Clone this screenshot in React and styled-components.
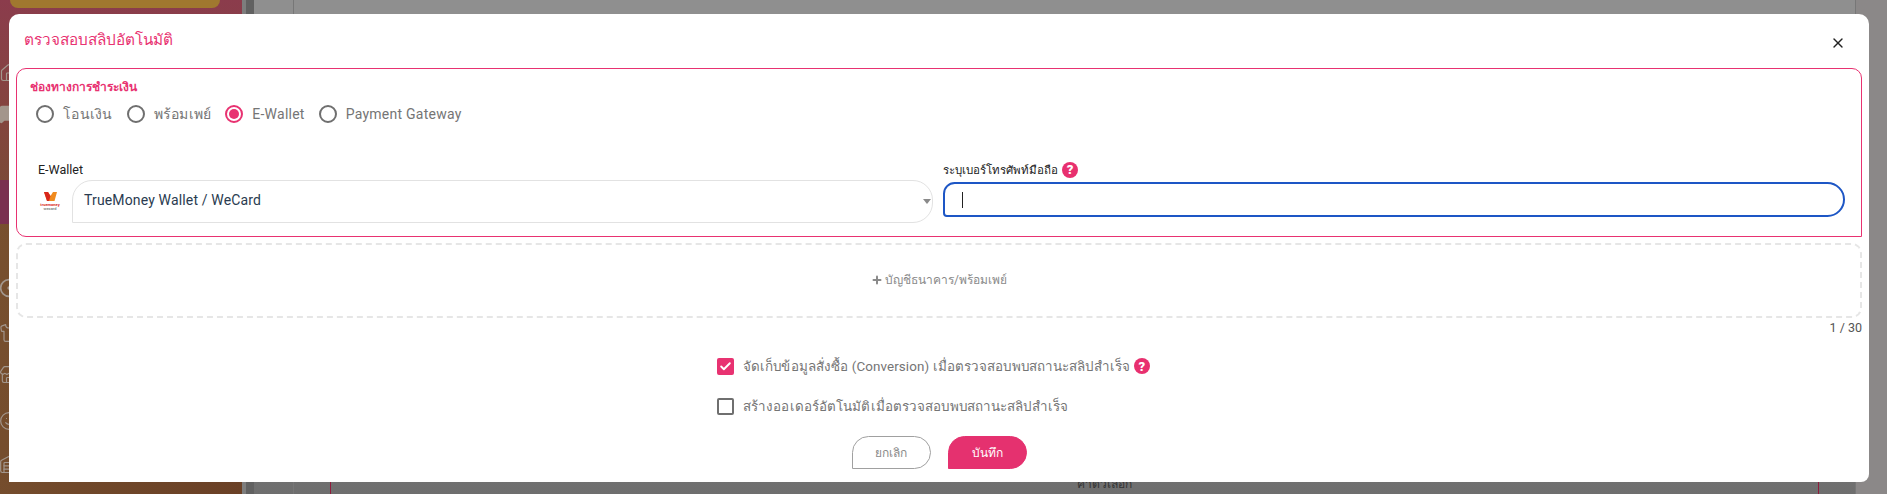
import styled, { createGlobalStyle } from "styled-components";
import { Home, MessageSquare, CircleDot, Shirt, Store, Smile, Warehouse, X, Plus, Check } from "lucide-react";

const GlobalStyle = createGlobalStyle`
  html, body { margin: 0; padding: 0; height: 100%; overflow: hidden; }
  body { font-family: Roboto, "Noto Sans", sans-serif; background: #8a8787; }
  * { box-sizing: border-box; }
`;

const Page = styled.div`
  display: flex;
  height: 494px;
  width: 1887px;
  overflow: hidden;
  background: #8b8888;
`;

const Sidebar = styled.aside`
  width: 242px;
  flex: none;
  display: flex;
  flex-direction: column;
  background: linear-gradient(100deg, #7a5230 0%, #70482a 50%, #6a4026 100%);
`;

const SideTop = styled.div`
  height: 180px;
  flex: none;
  background: linear-gradient(180deg, #8b3c4c 0%, #84443f 60%, #7c4a38 100%);
`;

const SideBand = styled.div`
  height: 44px;
  background: #7a3050;
  flex: none;
`;

const YellowPill = styled.div`
  width: 210px;
  height: 8px;
  margin-left: 10px;
  background: #a0782f;
  border-radius: 0 0 10px 10px;
`;

const SideIcons = styled.div`
  display: flex;
  flex-direction: column;
  margin-left: -1px;
  color: #a3968c;
`;

const SideIcon = styled.div`
  margin-top: ${(p) => p.$top}px;
  height: 20px;
`;

const Gutter = styled.div`
  width: 12px;
  flex: none;
  background: linear-gradient(90deg, #7d7d7d 0 4px, #616161 4px 100%);
`;

const LeftStrip = styled.div`
  width: 39px;
  flex: none;
  background: linear-gradient(180deg, #8f8f8f 0%, #8f8f8f 60%, #6e6e6e 100%);
`;

const Content = styled.main`
  width: 1563px;
  flex: none;
  display: flex;
  flex-direction: column;
  align-items: center;
  justify-content: flex-end;
  padding-bottom: 3px;
  border-left: 1px solid #777;
  border-right: 1px solid #777;
  background: linear-gradient(180deg, #8f8f8f 0%, #8f8f8f 60%, #6e6e6e 100%);
  position: relative;
`;

const PeekText = styled.div`
  font-size: 12px;
  color: #333;
  line-height: 14px;
  height: 10px;
  margin-left: 59px;
  overflow: hidden;
  display: flex;
  align-items: flex-end;
`;

const RedLine = styled.div`
  position: absolute;
  left: ${(p) => p.$left}px;
  bottom: 0;
  width: 1px;
  height: 12px;
  background: #8f1b3b;
`;

const Modal = styled.div`
  position: fixed;
  left: 9px;
  top: 14px;
  width: 1860px;
  height: 468px;
  background: #fff;
  border-radius: 10px 10px 8px 0;
  display: flex;
  flex-direction: column;
  padding: 0 7px;
`;

const ModalHeader = styled.header`
  height: 54px;
  flex: none;
  display: flex;
  align-items: center;
  justify-content: space-between;
  padding: 0 12px 0 8px;
`;

const Title = styled.h2`
  margin: 0 0 4px;
  font-size: 15.3px;
  font-weight: 400;
  color: #e83271;
`;

const CloseButton = styled.button`
  border: 0;
  background: none;
  padding: 0;
  width: 24px;
  height: 24px;
  margin-top: 4px;
  display: flex;
  align-items: center;
  justify-content: center;
  color: #222;
`;

const ChannelBox = styled.section`
  height: 169px;
  flex: none;
  width: 1846px;
  border: 1px solid #e83271;
  border-radius: 10px 10px 0 10px;
  padding: 11px 14px 0 13px;
`;

const ChannelLabel = styled.div`
  font-size: 12px;
  font-weight: 700;
  line-height: 14px;
  color: #e83271;
`;

const RadioRow = styled.div`
  display: flex;
  align-items: center;
  height: 20px;
  margin-top: 10px;
  padding-left: 6px;
  gap: 14px;
`;

const RadioItem = styled.label`
  display: flex;
  align-items: center;
  gap: 9px;
  font-size: 14px;
  letter-spacing: 0.25px;
  color: #757575;
`;

const RadioCircle = styled.span`
  width: 18px;
  height: 18px;
  border-radius: 50%;
  border: 2px solid ${(p) => (p.$on ? "#e83271" : "#6f6f6f")};
  display: flex;
  align-items: center;
  justify-content: center;
  &::after {
    content: "";
    display: ${(p) => (p.$on ? "block" : "none")};
    width: 10px;
    height: 10px;
    border-radius: 50%;
    background: #e83271;
  }
`;

const FieldRow = styled.div`
  display: flex;
  gap: 10px;
  margin-top: 36px;
  padding-left: 8px;
`;

const WalletField = styled.div`
  width: 895px;
`;

const PhoneField = styled.div`
  flex: 1;
  padding-right: 2px;
`;

const FieldLabel = styled.div`
  display: flex;
  align-items: center;
  gap: 4px;
  height: 20px;
  padding-bottom: 1px;
  font-size: ${(p) => p.$size || 12.5}px;
  color: #212121;
`;

const WalletRow = styled.div`
  display: flex;
  align-items: center;
`;

const LogoWrap = styled.div`
  width: 34px;
  flex: none;
  display: flex;
  flex-direction: column;
  align-items: center;
  padding-right: 10px;
`;

const LogoMark = styled.svg`
  margin-bottom: 2px;
`;

const LogoWord = styled.span`
  font-size: 4px;
  line-height: 4px;
  font-weight: 700;
  color: ${(p) => p.$color};
  white-space: nowrap;
`;

const SelectBox = styled.div`
  flex: 1;
  height: 43px;
  border: 1px solid #e2e2e2;
  border-radius: 20px 20px 20px 0;
  display: flex;
  align-items: center;
  justify-content: space-between;
  padding: 0 0 3px 11px;
  font-size: 14px;
  letter-spacing: 0.15px;
  color: #2a3b50;
`;

const SelectCaret = styled.span`
  width: 0;
  height: 0;
  margin: 3px 1px 0 0;
  border-left: 4px solid transparent;
  border-right: 4px solid transparent;
  border-top: 5px solid #8a8a8a;
`;

const PhoneInput = styled.div`
  height: 35px;
  margin-top: 2px;
  border: 2px solid #1d56c5;
  border-radius: 12px 18px 18px 4px;
  display: flex;
  align-items: center;
  padding-left: 17px;
`;

const Caret = styled.span`
  width: 1px;
  height: 16px;
  background: #222;
`;

const AddBox = styled.button`
  width: 1846px;
  height: 75px;
  flex: none;
  margin-top: 6px;
  padding: 0 0 2px;
  background: #fff;
  border: 2px dashed #e6e6e6;
  border-radius: 10px;
  display: flex;
  align-items: center;
  justify-content: center;
  gap: 2px;
  font-family: inherit;
  font-size: 12px;
  color: #8a8a8a;
`;

const Counter = styled.div`
  width: 1846px;
  text-align: right;
  font-size: 12.5px;
  line-height: 14px;
  margin-top: 3px;
  color: #555;
`;

const Options = styled.div`
  display: flex;
  flex-direction: column;
  margin: 22px 0 0 701px;
  gap: 22px;
`;

const OptionRow = styled.label`
  display: flex;
  align-items: center;
  height: 18px;
  gap: 9px;
  font-size: 13.4px;
  letter-spacing: 0.1px;
  color: #757575;
`;

const OptionText = styled.span`
  display: flex;
  align-items: center;
  gap: 4px;
`;

const CheckBox = styled.span`
  width: 17px;
  height: 17px;
  border-radius: 2px;
  display: flex;
  align-items: center;
  justify-content: center;
  color: #fff;
  background: ${(p) => (p.$on ? "#e83271" : "#fff")};
  border: 2px solid ${(p) => (p.$on ? "#e83271" : "#6f6f6f")};
`;

const HelpDot = styled.span`
  width: 16px;
  height: 16px;
  border-radius: 50%;
  background: #e8306f;
  color: #fff;
  font-size: 13px;
  font-weight: 900;
  display: inline-flex;
  align-items: center;
  justify-content: center;
`;

const Actions = styled.div`
  display: flex;
  justify-content: center;
  gap: 17px;
  margin-top: 21px;
`;

const ActionButton = styled.button`
  width: 79px;
  height: 33px;
  padding: 0;
  border-radius: 20px 20px 20px 0;
  font-family: inherit;
  font-size: 12px;
  border: 1px solid ${(p) => (p.$primary ? "#e5316f" : "#a0a0a0")};
  background: ${(p) => (p.$primary ? "#e5316f" : "#fff")};
  color: ${(p) => (p.$primary ? "#fff" : "#8a8a8a")};
`;

function TrueMoneyLogo() {
  return (
    <LogoWrap>
      <LogoMark width="13" height="9" viewBox="0 0 13 9">
        <path d="M0 0h4l2.5 4L9 0h4l-2.5 9H3z" fill="#f08a1d" />
        <path d="M0 0h4l2.5 4L5 9H3z" fill="#d8261c" />
      </LogoMark>
      <LogoWord $color="#d8261c">truemoney</LogoWord>
      <LogoWord $color="#888">wecard</LogoWord>
    </LogoWrap>
  );
}

export default function App() {
  return (
    <>
      <GlobalStyle />
      <Page>
        <Sidebar>
          <SideTop>
            <YellowPill />
            <SideIcons>
              <SideIcon $top={55}><Home size={20} strokeWidth={1.4} /></SideIcon>
              <SideIcon $top={21}><MessageSquare size={20} fill="#a3968c" /></SideIcon>
            </SideIcons>
          </SideTop>
          <SideBand />
          <SideIcons>
            <SideIcon $top={54}><CircleDot size={20} /></SideIcon>
            <SideIcon $top={25}><Shirt size={20} strokeWidth={1.4} /></SideIcon>
            <SideIcon $top={22}><Store size={20} strokeWidth={1.4} /></SideIcon>
            <SideIcon $top={26}><Smile size={20} strokeWidth={1.4} /></SideIcon>
            <SideIcon $top={24}><Warehouse size={20} strokeWidth={1.4} /></SideIcon>
          </SideIcons>
        </Sidebar>
        <Gutter />
        <LeftStrip />
        <Content>
          <RedLine $left={36} />
          <RedLine $left={1524} />
          <PeekText>ค่าตัวเลือก</PeekText>
        </Content>
      </Page>
      <Modal>
        <ModalHeader>
          <Title>ตรวจสอบสลิปอัตโนมัติ</Title>
          <CloseButton aria-label="close"><X size={16} strokeWidth={2} /></CloseButton>
        </ModalHeader>
        <ChannelBox>
          <ChannelLabel>ช่องทางการชำระเงิน</ChannelLabel>
          <RadioRow>
            <RadioItem><RadioCircle />โอนเงิน</RadioItem>
            <RadioItem><RadioCircle />พร้อมเพย์</RadioItem>
            <RadioItem><RadioCircle $on />E-Wallet</RadioItem>
            <RadioItem><RadioCircle />Payment Gateway</RadioItem>
          </RadioRow>
          <FieldRow>
            <WalletField>
              <FieldLabel>E-Wallet</FieldLabel>
              <WalletRow>
                <TrueMoneyLogo />
                <SelectBox>
                  TrueMoney Wallet / WeCard
                  <SelectCaret />
                </SelectBox>
              </WalletRow>
            </WalletField>
            <PhoneField>
              <FieldLabel $size={11.5}>ระบุเบอร์โทรศัพท์มือถือ <HelpDot>?</HelpDot></FieldLabel>
              <PhoneInput><Caret /></PhoneInput>
            </PhoneField>
          </FieldRow>
        </ChannelBox>
        <AddBox><Plus size={12} strokeWidth={4} /> บัญชีธนาคาร/พร้อมเพย์</AddBox>
        <Counter>1 / 30</Counter>
        <Options>
          <OptionRow>
            <CheckBox $on><Check size={13} strokeWidth={3.5} /></CheckBox>
            <OptionText>
              จัดเก็บข้อมูลสั่งซื้อ (Conversion) เมื่อตรวจสอบพบสถานะสลิปสำเร็จ
              <HelpDot>?</HelpDot>
            </OptionText>
          </OptionRow>
          <OptionRow>
            <CheckBox />
            <OptionText>สร้างออเดอร์อัตโนมัติเมื่อตรวจสอบพบสถานะสลิปสำเร็จ</OptionText>
          </OptionRow>
        </Options>
        <Actions>
          <ActionButton>ยกเลิก</ActionButton>
          <ActionButton $primary>บันทึก</ActionButton>
        </Actions>
      </Modal>
    </>
  );
}
